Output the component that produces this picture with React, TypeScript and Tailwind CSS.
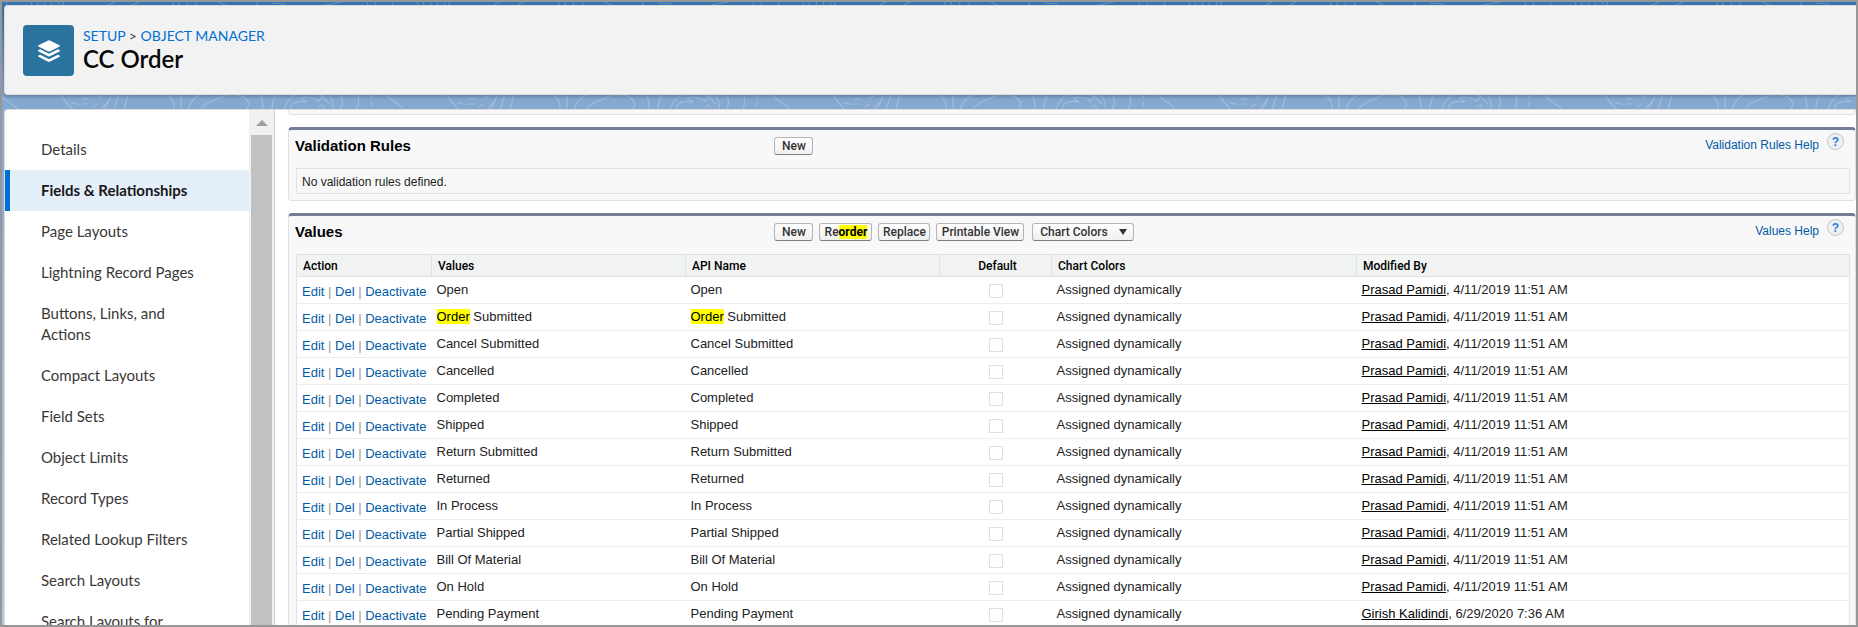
import React from "react";

const sidebarItems = [
  "Details",
  "Fields & Relationships",
  "Page Layouts",
  "Lightning Record Pages",
  "Buttons, Links, and Actions",
  "Compact Layouts",
  "Field Sets",
  "Object Limits",
  "Record Types",
  "Related Lookup Filters",
  "Search Layouts",
  "Search Layouts for Salesforce Classic",
];

const prasad = { by: "Prasad Pamidi", at: "4/11/2019 11:51 AM" };

const rows = [
  { value: "Open", ...prasad },
  { value: "Order Submitted", ...prasad },
  { value: "Cancel Submitted", ...prasad },
  { value: "Cancelled", ...prasad },
  { value: "Completed", ...prasad },
  { value: "Shipped", ...prasad },
  { value: "Return Submitted", ...prasad },
  { value: "Returned", ...prasad },
  { value: "In Process", ...prasad },
  { value: "Partial Shipped", ...prasad },
  { value: "Bill Of Material", ...prasad },
  { value: "On Hold", ...prasad },
  { value: "Pending Payment", by: "Girish Kalidindi", at: "6/29/2020 7:36 AM" },
];

function Highlight({ text }: { text: string }) {
  return (
    <>
      {text.split(/(order)/i).map((part, i) =>
        /^order$/i.test(part) ? (
          <mark key={i} className="bg-[#ffff00] text-black">
            {part}
          </mark>
        ) : (
          part
        ),
      )}
    </>
  );
}

function Contours() {
  return (
    <svg className="absolute inset-0 h-full w-full" aria-hidden="true">
      <defs>
        <pattern id="map" x="38" y="-2" width="386" height="627" patternUnits="userSpaceOnUse">
          <g fill="none" stroke="#fff" strokeWidth="1.2" strokeLinecap="round">
            <g strokeOpacity="0.22">
              <path d="M20 94L26 102L33 110M32 103L40 104.500M43 99H49M43 104H48M53 107L57 104.500M58 98L63 95.500" />
              <path d="M71 94C70 101 67 105 64 110M79 94L74 110M88 94L84 110M61 110C64 106 68 102 70 99" />
              <path d="M127 94C132 99 136 103 133 110M141 94V110" />
              <path d="M148 110C150 103 153 98 162 94" />
              <path d="M160 110C164 103 173 101 181 97C189 93 201 94 206 99C211 104 208 107 206 110" />
              <path d="M220 94C223 99 223 104 223 110M232 110C232 103 234 98 236 94M244 110C246 102 250 97 257 94" />
              <path d="M251 110C249 102 257 101 267 102C261 98 259 98 265 97C271 98 276 97 278 101L282 98L280 95C286 97 285 101 290 104M279 107C283 103 286 107 283 110" />
              <path d="M288 94C293 99 294 104 293 110M300 94C304 100 303 105 300 110M317 94C320 100 319 105 316 110M330 94L332 98M331 102V106" />
              <path d="M346 94C350 101 358 102 364 110" />
            </g>
            <g strokeOpacity="0.2">
              <path d="M377 1L378 6M383 1L384 6M5 1L4 6M12 1L11 6M19 1L18 6M24 1L22 6M66 6L76 1M90 6L100 1M132 1L134 6M138 1L140 6M147 1L148 6M155 1L158 6M177 1L187 6M216 1L218 6M232 3L246 4M285 5L302 2M327 1L328 6M335 1L336 6M352 1L353 6" />
            </g>
          </g>
        </pattern>
      </defs>
      <rect width="100%" height="100%" fill="url(#map)" />
    </svg>
  );
}

function LayersIcon() {
  return (
    <svg viewBox="0 0 24 24" className="h-6 w-6" fill="#fff" aria-hidden="true">
      <path d="M11.200 1.500a2 2 0 0 1 1.600 0l9.700 4.700c.6.300.6 1 0 1.300l-9.700 4.900a2 2 0 0 1-1.600 0L1.500 7.500c-.6-.3-.6-1 0-1.300z" />
      <path d="M1.500 11.100l1.600-.8 8 4c.6.300 1.200.3 1.800 0l8-4 1.600.8c.6.300.6 1 0 1.300l-9.700 4.900a2 2 0 0 1-1.600 0L1.500 12.400c-.6-.3-.6-1 0-1.300z" />
      <path d="M1.500 16.500l1.600-.8 8 4c.6.300 1.200.3 1.800 0l8-4 1.600.8c.6.300.6 1 0 1.300l-9.700 4.900a2 2 0 0 1-1.600 0L1.500 17.800c-.6-.3-.6-1 0-1.300z" />
    </svg>
  );
}

function Btn({ children, className = "" }: { children: React.ReactNode; className?: string }) {
  return (
    <button
      type="button"
      className={`flex h-[18px] items-center justify-center rounded-[3px] border border-[#b5b5b5] border-b-[#7f7f7f] bg-linear-to-b from-white to-[#f0f0f0] text-xs leading-4 font-medium whitespace-nowrap text-[#333] ${className}`}
    >
      {children}
    </button>
  );
}

function Section({
  title,
  help,
  buttons,
  children,
}: {
  title: string;
  help: string;
  buttons: React.ReactNode;
  children: React.ReactNode;
}) {
  return (
    <section className="rounded-[4px] border border-t-[3px] border-[#dfe1e5] border-t-[#747e96] bg-[#f8f8f8] pb-[6px]">
      <div className="flex h-[38px] items-start pt-[7px]">
        <h2 className="w-[31%] shrink-0 pl-[6px] text-[15px] leading-[18px] font-bold text-black">{title}</h2>
        <div className="flex grow font-['Roboto',sans-serif]">{buttons}</div>
        <a href="#" className="mr-2 text-xs leading-4 text-[#015ba7]">
          {help}
        </a>
        <a
          href="#"
          aria-label={`${title} help`}
          className="-mt-1 mr-[11px] flex h-[17px] w-[17px] items-center justify-center rounded-full border border-[#c4c4c4] bg-[#f0f0f0] text-xs leading-none font-bold text-[#2a7de1]"
        >
          ?
        </a>
      </div>
      <div className="pr-[5px] pl-[7px]">{children}</div>
    </section>
  );
}

function ValuesTable() {
  const th = "border-l border-[#dfe3e3] pl-[6px] font-medium";
  return (
    <table className="w-full table-fixed border-collapse border border-[#dfe1e5] bg-white text-[13px] leading-4 text-[#222]">
      <colgroup>
        <col className="w-[135px]" />
        <col className="w-[254px]" />
        <col className="w-[254px]" />
        <col className="w-[112px]" />
        <col className="w-[305px]" />
        <col />
      </colgroup>
      <thead>
        <tr className="h-[22px] border-b border-[#dfe1e5] bg-[#f1f3f3] text-left font-['Roboto',sans-serif] text-xs text-black">
          <th className={th}>Action</th>
          <th className={th}>Values</th>
          <th className={th}>API Name</th>
          <th className="border-l border-[#dfe3e3] pl-1 text-center font-medium">Default</th>
          <th className={th}>Chart Colors</th>
          <th className={th}>Modified By</th>
        </tr>
      </thead>
      <tbody>
        {rows.map((row) => (
          <tr key={row.value} className="h-[27px] border-b border-[#ececec] align-top">
            <td className="pt-[7px] pl-[5px] whitespace-nowrap text-[#999]">
              <a href="#" className="text-[#015ba7]">Edit</a> | <a href="#" className="text-[#015ba7]">Del</a> |{" "}
              <a href="#" className="text-[#015ba7]">Deactivate</a>
            </td>
            <td className="pt-[5px] pl-[5px]">
              <Highlight text={row.value} />
            </td>
            <td className="pt-[5px] pl-[5px]">
              <Highlight text={row.value} />
            </td>
            <td className="pt-[7px]">
              <input
                type="checkbox"
                disabled
                aria-label={`${row.value} is default`}
                className="mx-auto block h-[14px] w-[14px] appearance-none border border-[#e0e0e0] bg-white"
              />
            </td>
            <td className="pt-[5px] pl-[5px]">Assigned dynamically</td>
            <td className="pt-[5px] pl-[5px]">
              <a href="#" className="text-black underline">{row.by}</a>, {row.at}
            </td>
          </tr>
        ))}
      </tbody>
    </table>
  );
}

export default function App() {
  return (
    <div className="relative flex h-screen flex-col overflow-hidden border-2 border-[#979797] bg-linear-to-b from-[#3272ae] via-[#85a8d1] via-16% to-[#b4c7e6] pt-[3px] pl-[2px] font-['Liberation_Sans',Arial,sans-serif]">
      <Contours />
      <header className="relative flex h-[90px] shrink-0 items-start rounded-l-[4px] border border-r-0 border-[#dddbda] bg-[#f2f2f2] pt-[19px] pl-[18px] shadow-[0_2px_3px_rgba(0,0,0,0.2)]">
        <div className="flex h-[51px] w-[51px] items-center justify-center rounded-[4px] bg-[#2a739e]">
          <LayersIcon />
        </div>
        <div className="ml-[9px] font-['Lato',sans-serif]">
          <nav aria-label="Breadcrumb" className="text-sm leading-[22px] text-[#3e3e3c]">
            <a href="#" className="text-[#0070d2]">SETUP</a> &gt;{" "}
            <a href="#" className="text-[#0070d2]">OBJECT MANAGER</a>
          </nav>
          <h1 className="text-2xl leading-6 font-semibold text-[#080707]">CC Order</h1>
        </div>
      </header>

      <div className="relative mt-[14px] flex min-h-0 grow overflow-hidden rounded-tl-[4px] border border-r-0 border-b-0 border-[#dddbda] bg-white">
        <nav aria-label="Object settings" className="w-[244px] shrink-0 pt-[19px]">
          <ul className="font-['Lato',sans-serif] text-[15px] leading-[21px] text-[#3a3836]">
            {sidebarItems.map((item, i) => (
              <li key={item}>
                <a
                  href="#"
                  aria-current={i === 1 ? "page" : undefined}
                  className={
                    i === 1
                      ? "block border-l-[5px] border-[#0070d2] bg-[#e5effa] py-[10px] pr-10 pl-[31px] font-bold text-[#181818]"
                      : "block py-[10px] pr-10 pl-9"
                  }
                >
                  {item}
                </a>
              </li>
            ))}
          </ul>
        </nav>
        <div className="flex w-[26px] shrink-0 flex-col items-center border-r border-[#d0d0d0] bg-[#f1f1f1]" aria-hidden="true">
          <svg viewBox="0 0 12 6" className="mt-[10px] mb-[9px] h-[6px] w-3 shrink-0" fill="#a0a0a0">
            <path d="M6 0L12 6H0z" />
          </svg>
          <div className="w-[21px] grow bg-[#c1c1c1]" />
        </div>
        <main className="flex min-w-0 grow flex-col gap-3 overflow-hidden pl-[13px]">
          <div className="h-[5px] shrink-0 rounded-b-[4px] border border-t-0 border-[#dfe1e5] bg-[#f8f8f8]" />
          <Section title="Validation Rules" help="Validation Rules Help" buttons={<Btn className="w-[39px]">New</Btn>}>
            <p className="border border-[#dfe1e5] px-[5px] pt-[5px] pb-[3px] text-xs leading-4 text-[#222]">
              No validation rules defined.
            </p>
          </Section>
          <Section
            title="Values"
            help="Values Help"
            buttons={
              <div className="flex gap-[6px]">
                <Btn className="w-[39px]">New</Btn>
                <Btn className="w-[53px]">
                  <span>
                    Re<mark className="bg-[#ffff00] font-bold text-black">order</mark>
                  </span>
                </Btn>
                <Btn className="w-[52px]">Replace</Btn>
                <Btn className="w-[88px]">Printable View</Btn>
                <Btn className="ml-[2px] w-[102px] gap-[11px]">
                  Chart Colors
                  <svg viewBox="0 0 8 6" className="h-[6px] w-2" fill="#333" aria-hidden="true">
                    <path d="M0 0H8L4 6z" />
                  </svg>
                </Btn>
              </div>
            }
          >
            <ValuesTable />
          </Section>
        </main>
      </div>
    </div>
  );
}
